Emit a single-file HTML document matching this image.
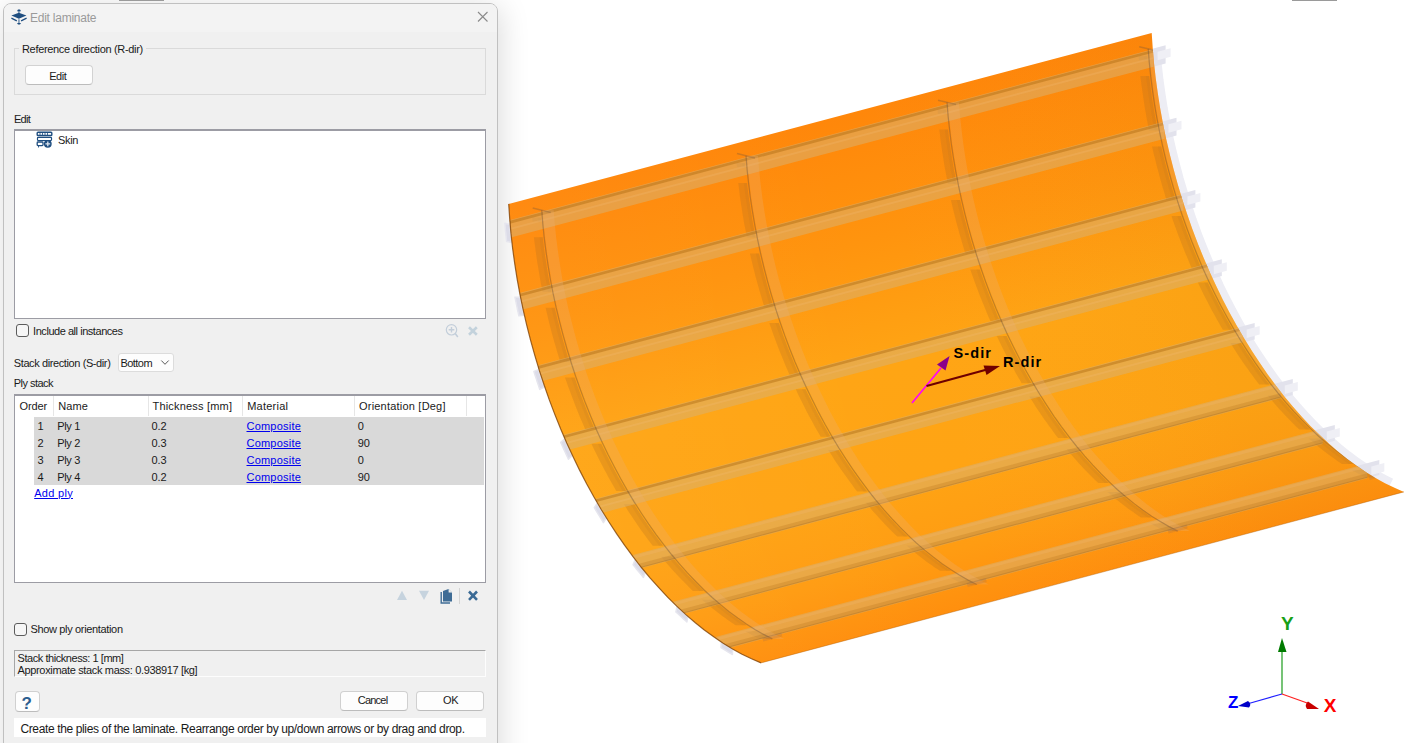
<!DOCTYPE html>
<html><head><meta charset="utf-8"><style>
*{margin:0;padding:0;box-sizing:border-box}
html,body{width:1421px;height:743px;overflow:hidden;background:#fff;position:relative;font-family:"Liberation Sans",sans-serif}
.scene{position:absolute;left:0;top:0}
.a{position:absolute}
.t{position:absolute;white-space:pre;line-height:1;font-family:"Liberation Sans",sans-serif}
</style></head><body>
<div class=a style="left:3px;top:3px;width:495px;height:780px;border-radius:8px 8px 0 0;box-shadow:2px 4px 30px rgba(0,0,0,0.15)"></div>
<svg class="scene" width="1421" height="743" viewBox="0 0 1421 743">
<defs>
<linearGradient id="gv" gradientUnits="userSpaceOnUse" x1="509.0" y1="204.0" x2="639.8" y2="695.9">
<stop offset="0" stop-color="#ff870a"/><stop offset="0.25" stop-color="#ff940e"/><stop offset="0.5" stop-color="#ffa514"/><stop offset="0.72" stop-color="#ffa414"/><stop offset="0.88" stop-color="#ff9c12"/><stop offset="1" stop-color="#ff8f0e"/>
</linearGradient>
<linearGradient id="gu" gradientUnits="userSpaceOnUse" x1="509" y1="204" x2="1152" y2="33">
<stop offset="0" stop-color="#fff" stop-opacity="0.03"/><stop offset="0.5" stop-color="#fff" stop-opacity="0"/><stop offset="1" stop-color="#000" stop-opacity="0.015"/>
</linearGradient>
<clipPath id="pc"><path d="M761.0,662.9 L751.5,658.8 L742.0,654.2 L732.5,649.0 L723.1,643.2 L713.7,636.8 L704.3,629.9 L695.0,622.5 L685.8,614.6 L676.7,606.1 L667.6,597.2 L658.8,587.7 L650.0,577.8 L641.4,567.5 L633.0,556.7 L624.7,545.4 L616.7,533.8 L608.8,521.8 L601.2,509.5 L593.8,496.8 L586.6,483.7 L579.7,470.4 L573.1,456.8 L566.7,442.9 L560.6,428.8 L554.8,414.4 L549.3,399.9 L544.2,385.2 L539.3,370.4 L534.8,355.4 L530.6,340.3 L526.7,325.1 L523.2,309.9 L520.0,294.7 L517.2,279.4 L514.8,264.2 L512.7,249.0 L511.0,233.9 L509.7,218.8 L508.7,203.9 L1151.7,32.9 L1152.7,47.8 L1154.0,62.9 L1155.7,78.0 L1157.8,93.2 L1160.2,108.4 L1163.0,123.7 L1166.2,138.9 L1169.7,154.1 L1173.6,169.3 L1177.8,184.4 L1182.3,199.4 L1187.2,214.2 L1192.3,228.9 L1197.8,243.4 L1203.6,257.8 L1209.7,271.9 L1216.1,285.8 L1222.7,299.4 L1229.6,312.7 L1236.8,325.8 L1244.2,338.5 L1251.8,350.8 L1259.7,362.8 L1267.7,374.4 L1276.0,385.7 L1284.4,396.5 L1293.0,406.8 L1301.8,416.7 L1310.6,426.2 L1319.7,435.1 L1328.8,443.6 L1338.0,451.5 L1347.3,458.9 L1356.7,465.8 L1366.1,472.2 L1375.5,478.0 L1385.0,483.2 L1394.5,487.8 L1404.0,491.9Z"/></clipPath>
</defs>
<path d="M1153.0,52.1 L1154.4,66.1 L1156.0,80.1 L1158.0,94.3 L1160.2,108.4 L1162.8,122.6 L1165.7,136.7 L1168.9,150.8 L1172.4,164.9 L1176.2,179.0 L1180.3,192.9 L1184.7,206.7 L1189.3,220.5 L1194.2,234.1 L1199.4,247.5 L1204.9,260.8 L1210.6,273.8 L1216.5,286.7 L1222.7,299.3 L1229.1,311.7 L1235.7,323.8 L1242.5,335.7 L1249.6,347.3 L1256.8,358.5 L1264.2,369.4 L1271.8,380.0 L1279.5,390.3 L1287.4,400.1 L1295.4,409.6 L1303.6,418.7 L1311.8,427.4 L1320.2,435.6 L1328.7,443.5 L1337.2,450.9 L1345.9,457.8 L1354.5,464.3 L1363.3,470.3 L1372.1,475.9 L1380.8,481.0 L1389.7,485.5" fill="none" stroke="#ededf4" stroke-width="15"/>
<path d="M530.6,214.1 L1165.6,45.2 L1165.6,63.5 L530.6,232.4Z" fill="#e2e2ec"/>
<path d="M509.7,224.5 L509.9,227.0 L510.1,229.6 L510.4,232.1 L510.6,234.7 L510.9,237.3 L511.2,239.8 L511.5,242.4 L506.6,241.4 L506.3,238.8 L506.0,236.2 L505.8,233.6 L505.5,230.9 L505.3,228.3 L505.1,225.7 L504.9,223.2Z" fill="#dcdce8" stroke="#e6e6ee" stroke-width="1.5" stroke-linejoin="round"/>
<path d="M1157.6,51.7 L1170.6,48.2 L1170.6,56.7 L1157.6,60.2Z" fill="#efeff5"/>
<path d="M541.5,286.6 L1176.5,117.8 L1176.5,135.6 L541.5,304.5Z" fill="#e2e2ec"/>
<path d="M520.0,297.2 L520.6,299.8 L521.1,302.3 L521.6,304.9 L522.2,307.5 L522.7,310.1 L523.3,312.7 L523.9,315.3 L518.9,315.8 L518.3,313.2 L517.7,310.5 L517.2,307.9 L516.6,305.2 L516.1,302.6 L515.6,300.0 L515.0,297.3Z" fill="#dcdce8" stroke="#e6e6ee" stroke-width="1.5" stroke-linejoin="round"/>
<path d="M1168.5,124.3 L1181.5,120.8 L1181.5,129.3 L1168.5,132.8Z" fill="#efeff5"/>
<path d="M560.4,358.8 L1195.4,190.0 L1195.4,207.4 L560.4,376.2Z" fill="#e2e2ec"/>
<path d="M538.5,369.6 L539.3,372.2 L540.2,374.7 L541.0,377.2 L541.8,379.7 L542.6,382.2 L543.5,384.7 L544.3,387.2 L539.8,389.4 L538.9,386.8 L538.1,384.3 L537.2,381.7 L536.4,379.1 L535.5,376.6 L534.7,374.0 L533.9,371.4Z" fill="#dcdce8" stroke="#e6e6ee" stroke-width="1.5" stroke-linejoin="round"/>
<path d="M1187.4,196.5 L1200.4,193.0 L1200.4,201.5 L1187.4,205.0Z" fill="#efeff5"/>
<path d="M586.8,428.0 L1221.8,259.2 L1221.8,276.1 L586.8,445.0Z" fill="#e2e2ec"/>
<path d="M564.6,439.2 L565.6,441.6 L566.7,444.0 L567.7,446.4 L568.8,448.7 L569.9,451.1 L571.0,453.4 L572.1,455.8 L568.4,459.2 L567.3,456.8 L566.2,454.4 L565.1,452.0 L564.0,449.6 L562.9,447.2 L561.8,444.8 L560.7,442.4Z" fill="#dcdce8" stroke="#e6e6ee" stroke-width="1.5" stroke-linejoin="round"/>
<path d="M1213.8,265.7 L1226.8,262.2 L1226.8,270.7 L1213.8,274.2Z" fill="#efeff5"/>
<path d="M619.7,491.8 L1254.7,322.9 L1254.7,339.4 L619.7,508.3Z" fill="#e2e2ec"/>
<path d="M597.1,503.5 L598.4,505.6 L599.7,507.8 L600.9,509.9 L602.2,512.0 L603.5,514.1 L604.8,516.2 L606.1,518.3 L603.4,522.6 L602.1,520.4 L600.8,518.3 L599.5,516.2 L598.2,514.1 L596.8,511.9 L595.5,509.7 L594.3,507.6Z" fill="#dcdce8" stroke="#e6e6ee" stroke-width="1.5" stroke-linejoin="round"/>
<path d="M1246.7,329.4 L1259.7,325.9 L1259.7,334.4 L1246.7,337.9Z" fill="#efeff5"/>
<path d="M657.8,547.8 L1292.8,378.9 L1292.8,394.9 L657.8,563.8Z" fill="#e2e2ec"/>
<path d="M635.0,560.1 L636.5,561.9 L637.9,563.7 L639.3,565.5 L640.8,567.3 L642.2,569.1 L643.7,570.9 L645.1,572.7 L643.4,577.4 L641.9,575.6 L640.5,573.8 L639.0,572.0 L637.5,570.2 L636.0,568.4 L634.6,566.5 L633.1,564.7Z" fill="#dcdce8" stroke="#e6e6ee" stroke-width="1.5" stroke-linejoin="round"/>
<path d="M1284.8,385.4 L1297.8,381.9 L1297.8,390.4 L1284.8,393.9Z" fill="#efeff5"/>
<path d="M699.8,594.0 L1334.8,425.1 L1334.8,440.7 L699.8,609.6Z" fill="#e2e2ec"/>
<path d="M677.0,607.0 L678.5,608.5 L680.0,609.9 L681.6,611.3 L683.1,612.8 L684.7,614.2 L686.2,615.6 L687.8,616.9 L686.9,621.9 L685.3,620.5 L683.7,619.1 L682.2,617.7 L680.6,616.2 L679.0,614.8 L677.4,613.3 L675.9,611.9Z" fill="#dcdce8" stroke="#e6e6ee" stroke-width="1.5" stroke-linejoin="round"/>
<path d="M1326.8,431.6 L1339.8,428.1 L1339.8,436.6 L1326.8,440.1Z" fill="#efeff5"/>
<path d="M744.3,628.8 L1379.3,459.9 L1379.3,475.1 L744.3,644.0Z" fill="#e2e2ec"/>
<path d="M721.4,642.6 L723.0,643.6 L724.6,644.6 L726.2,645.6 L727.8,646.6 L729.4,647.6 L731.0,648.6 L732.6,649.5 L732.4,654.5 L730.8,653.6 L729.1,652.6 L727.5,651.6 L725.9,650.6 L724.3,649.6 L722.6,648.6 L721.0,647.6Z" fill="#dcdce8" stroke="#e6e6ee" stroke-width="1.5" stroke-linejoin="round"/>
<path d="M1371.3,466.4 L1384.3,462.9 L1384.3,471.4 L1371.3,474.9Z" fill="#efeff5"/>
<path d="M761.0,662.9 L751.5,658.8 L742.0,654.2 L732.5,649.0 L723.1,643.2 L713.7,636.8 L704.3,629.9 L695.0,622.5 L685.8,614.6 L676.7,606.1 L667.6,597.2 L658.8,587.7 L650.0,577.8 L641.4,567.5 L633.0,556.7 L624.7,545.4 L616.7,533.8 L608.8,521.8 L601.2,509.5 L593.8,496.8 L586.6,483.7 L579.7,470.4 L573.1,456.8 L566.7,442.9 L560.6,428.8 L554.8,414.4 L549.3,399.9 L544.2,385.2 L539.3,370.4 L534.8,355.4 L530.6,340.3 L526.7,325.1 L523.2,309.9 L520.0,294.7 L517.2,279.4 L514.8,264.2 L512.7,249.0 L511.0,233.9 L509.7,218.8 L508.7,203.9 L1151.7,32.9 L1152.7,47.8 L1154.0,62.9 L1155.7,78.0 L1157.8,93.2 L1160.2,108.4 L1163.0,123.7 L1166.2,138.9 L1169.7,154.1 L1173.6,169.3 L1177.8,184.4 L1182.3,199.4 L1187.2,214.2 L1192.3,228.9 L1197.8,243.4 L1203.6,257.8 L1209.7,271.9 L1216.1,285.8 L1222.7,299.4 L1229.6,312.7 L1236.8,325.8 L1244.2,338.5 L1251.8,350.8 L1259.7,362.8 L1267.7,374.4 L1276.0,385.7 L1284.4,396.5 L1293.0,406.8 L1301.8,416.7 L1310.6,426.2 L1319.7,435.1 L1328.8,443.6 L1338.0,451.5 L1347.3,458.9 L1356.7,465.8 L1366.1,472.2 L1375.5,478.0 L1385.0,483.2 L1394.5,487.8 L1404.0,491.9Z" fill="url(#gv)"/>
<path d="M761.0,662.9 L751.5,658.8 L742.0,654.2 L732.5,649.0 L723.1,643.2 L713.7,636.8 L704.3,629.9 L695.0,622.5 L685.8,614.6 L676.7,606.1 L667.6,597.2 L658.8,587.7 L650.0,577.8 L641.4,567.5 L633.0,556.7 L624.7,545.4 L616.7,533.8 L608.8,521.8 L601.2,509.5 L593.8,496.8 L586.6,483.7 L579.7,470.4 L573.1,456.8 L566.7,442.9 L560.6,428.8 L554.8,414.4 L549.3,399.9 L544.2,385.2 L539.3,370.4 L534.8,355.4 L530.6,340.3 L526.7,325.1 L523.2,309.9 L520.0,294.7 L517.2,279.4 L514.8,264.2 L512.7,249.0 L511.0,233.9 L509.7,218.8 L508.7,203.9 L1151.7,32.9 L1152.7,47.8 L1154.0,62.9 L1155.7,78.0 L1157.8,93.2 L1160.2,108.4 L1163.0,123.7 L1166.2,138.9 L1169.7,154.1 L1173.6,169.3 L1177.8,184.4 L1182.3,199.4 L1187.2,214.2 L1192.3,228.9 L1197.8,243.4 L1203.6,257.8 L1209.7,271.9 L1216.1,285.8 L1222.7,299.4 L1229.6,312.7 L1236.8,325.8 L1244.2,338.5 L1251.8,350.8 L1259.7,362.8 L1267.7,374.4 L1276.0,385.7 L1284.4,396.5 L1293.0,406.8 L1301.8,416.7 L1310.6,426.2 L1319.7,435.1 L1328.8,443.6 L1338.0,451.5 L1347.3,458.9 L1356.7,465.8 L1366.1,472.2 L1375.5,478.0 L1385.0,483.2 L1394.5,487.8 L1404.0,491.9Z" fill="url(#gu)"/>
<g clip-path="url(#pc)">
<path d="M532.2,217.5 L532.3,217.8 L532.3,218.1 L532.3,218.4 L532.3,218.7 L532.4,219.0 L532.4,219.3 L532.4,219.6 L532.4,220.0 L532.5,220.3 L532.5,220.6 L532.5,220.9 L532.6,221.2 L532.6,221.5 L541.1,221.5 L541.1,221.2 L541.0,220.9 L541.0,220.6 L541.0,220.3 L540.9,220.0 L540.9,219.6 L540.9,219.3 L540.9,219.0 L540.8,218.7 L540.8,218.4 L540.8,218.1 L540.8,217.8 L540.7,217.5Z" fill="#b07020" fill-opacity="0.27"/>
<path d="M537.7,217.5 L537.8,217.8 L537.8,218.1 L537.8,218.4 L537.8,218.7 L537.9,219.0 L537.9,219.3 L537.9,219.6 L537.9,220.0 L538.0,220.3 L538.0,220.6 L538.0,220.9 L538.1,221.2 L538.1,221.5 L541.1,221.5 L541.1,221.2 L541.0,220.9 L541.0,220.6 L541.0,220.3 L540.9,220.0 L540.9,219.6 L540.9,219.3 L540.9,219.0 L540.8,218.7 L540.8,218.4 L540.8,218.1 L540.8,217.8 L540.7,217.5Z" fill="#a06a30" fill-opacity="0.10"/>
<path d="M533.9,237.3 L534.4,241.5 L535.0,245.7 L535.5,249.9 L536.1,254.0 L536.7,258.2 L537.3,262.4 L538.0,266.6 L538.7,270.8 L539.4,275.0 L540.1,279.2 L540.9,283.4 L541.7,287.6 L542.6,291.8 L551.3,291.8 L550.5,287.6 L549.7,283.4 L548.9,279.2 L548.1,275.0 L547.4,270.8 L546.7,266.6 L546.1,262.4 L545.4,258.2 L544.8,254.0 L544.2,249.9 L543.7,245.7 L543.2,241.5 L542.7,237.3Z" fill="#b07020" fill-opacity="0.27"/>
<path d="M539.6,237.3 L540.1,241.5 L540.6,245.7 L541.1,249.9 L541.7,254.0 L542.3,258.2 L543.0,262.4 L543.6,266.6 L544.3,270.8 L545.0,275.0 L545.8,279.2 L546.6,283.4 L547.4,287.6 L548.2,291.8 L551.3,291.8 L550.5,287.6 L549.7,283.4 L548.9,279.2 L548.1,275.0 L547.4,270.8 L546.7,266.6 L546.1,262.4 L545.4,258.2 L544.8,254.0 L544.2,249.9 L543.7,245.7 L543.2,241.5 L542.7,237.3Z" fill="#a06a30" fill-opacity="0.10"/>
<path d="M545.6,307.8 L546.6,312.0 L547.6,316.2 L548.6,320.4 L549.6,324.5 L550.7,328.7 L551.8,332.9 L552.9,337.0 L554.1,341.2 L555.3,345.3 L556.5,349.5 L557.7,353.6 L559.0,357.7 L560.2,361.8 L569.4,361.8 L568.1,357.7 L566.8,353.6 L565.6,349.5 L564.4,345.3 L563.2,341.2 L562.1,337.0 L560.9,332.9 L559.8,328.7 L558.8,324.5 L557.7,320.4 L556.7,316.2 L555.7,312.0 L554.7,307.8Z" fill="#b07020" fill-opacity="0.27"/>
<path d="M551.4,307.8 L552.4,312.0 L553.4,316.2 L554.4,320.4 L555.5,324.5 L556.5,328.7 L557.6,332.9 L558.8,337.0 L559.9,341.2 L561.1,345.3 L562.3,349.5 L563.5,353.6 L564.8,357.7 L566.1,361.8 L569.4,361.8 L568.1,357.7 L566.8,353.6 L565.6,349.5 L564.4,345.3 L563.2,341.2 L562.1,337.0 L560.9,332.9 L559.8,328.7 L558.8,324.5 L557.7,320.4 L556.7,316.2 L555.7,312.0 L554.7,307.8Z" fill="#a06a30" fill-opacity="0.10"/>
<path d="M565.0,377.4 L566.4,381.5 L567.8,385.5 L569.3,389.5 L570.8,393.6 L572.3,397.6 L573.8,401.6 L575.3,405.5 L576.9,409.5 L578.5,413.4 L580.1,417.4 L581.8,421.3 L583.5,425.2 L585.1,429.1 L594.6,429.1 L593.0,425.2 L591.3,421.3 L589.6,417.4 L588.0,413.4 L586.4,409.5 L584.9,405.5 L583.3,401.6 L581.8,397.6 L580.3,393.6 L578.8,389.5 L577.3,385.5 L575.9,381.5 L574.5,377.4Z" fill="#b07020" fill-opacity="0.27"/>
<path d="M571.0,377.4 L572.5,381.5 L573.9,385.5 L575.3,389.5 L576.8,393.6 L578.3,397.6 L579.8,401.6 L581.4,405.5 L583.0,409.5 L584.6,413.4 L586.2,417.4 L587.8,421.3 L589.5,425.2 L591.2,429.1 L594.6,429.1 L593.0,425.2 L591.3,421.3 L589.6,417.4 L588.0,413.4 L586.4,409.5 L584.9,405.5 L583.3,401.6 L581.8,397.6 L580.3,393.6 L578.8,389.5 L577.3,385.5 L575.9,381.5 L574.5,377.4Z" fill="#a06a30" fill-opacity="0.10"/>
<path d="M591.4,443.7 L593.2,447.4 L595.0,451.2 L596.9,455.0 L598.7,458.7 L600.6,462.4 L602.5,466.0 L604.4,469.7 L606.4,473.3 L608.3,476.9 L610.3,480.5 L612.3,484.1 L614.3,487.6 L616.3,491.1 L626.2,491.1 L624.2,487.6 L622.2,484.1 L620.2,480.5 L618.2,476.9 L616.2,473.3 L614.3,469.7 L612.4,466.0 L610.5,462.4 L608.6,458.7 L606.7,455.0 L604.9,451.2 L603.1,447.4 L601.3,443.7Z" fill="#b07020" fill-opacity="0.27"/>
<path d="M597.7,443.7 L599.5,447.4 L601.3,451.2 L603.1,455.0 L605.0,458.7 L606.9,462.4 L608.8,466.0 L610.7,469.7 L612.6,473.3 L614.6,476.9 L616.6,480.5 L618.6,484.1 L620.6,487.6 L622.6,491.1 L626.2,491.1 L624.2,487.6 L622.2,484.1 L620.2,480.5 L618.2,476.9 L616.2,473.3 L614.3,469.7 L612.4,466.0 L610.5,462.4 L608.6,458.7 L606.7,455.0 L604.9,451.2 L603.1,447.4 L601.3,443.7Z" fill="#a06a30" fill-opacity="0.10"/>
<path d="M623.9,504.2 L626.0,507.6 L628.1,510.9 L630.3,514.2 L632.5,517.5 L634.7,520.8 L636.9,524.0 L639.1,527.2 L641.3,530.4 L643.6,533.5 L645.8,536.6 L648.1,539.7 L650.4,542.7 L652.7,545.7 L663.0,545.7 L660.7,542.7 L658.4,539.7 L656.1,536.6 L653.8,533.5 L651.6,530.4 L649.3,527.2 L647.1,524.0 L644.9,520.8 L642.7,517.5 L640.6,514.2 L638.4,510.9 L636.3,507.6 L634.2,504.2Z" fill="#b07020" fill-opacity="0.27"/>
<path d="M630.4,504.2 L632.5,507.6 L634.6,510.9 L636.8,514.2 L638.9,517.5 L641.1,520.8 L643.3,524.0 L645.6,527.2 L647.8,530.4 L650.0,533.5 L652.3,536.6 L654.6,539.7 L656.9,542.7 L659.2,545.7 L663.0,545.7 L660.7,542.7 L658.4,539.7 L656.1,536.6 L653.8,533.5 L651.6,530.4 L649.3,527.2 L647.1,524.0 L644.9,520.8 L642.7,517.5 L640.6,514.2 L638.4,510.9 L636.3,507.6 L634.2,504.2Z" fill="#a06a30" fill-opacity="0.10"/>
<path d="M661.3,556.8 L663.6,559.7 L666.0,562.5 L668.4,565.3 L670.8,568.0 L673.2,570.7 L675.6,573.3 L678.1,576.0 L680.5,578.6 L683.0,581.1 L685.5,583.6 L687.9,586.1 L690.4,588.5 L692.9,590.9 L703.6,590.9 L701.1,588.5 L698.6,586.1 L696.1,583.6 L693.6,581.1 L691.2,578.6 L688.7,576.0 L686.3,573.3 L683.9,570.7 L681.4,568.0 L679.0,565.3 L676.6,562.5 L674.3,559.7 L671.9,556.8Z" fill="#b07020" fill-opacity="0.27"/>
<path d="M667.9,556.8 L670.3,559.7 L672.7,562.5 L675.1,565.3 L677.5,568.0 L679.9,570.7 L682.3,573.3 L684.8,576.0 L687.2,578.6 L689.7,581.1 L692.1,583.6 L694.6,586.1 L697.1,588.5 L699.6,590.9 L703.6,590.9 L701.1,588.5 L698.6,586.1 L696.1,583.6 L693.6,581.1 L691.2,578.6 L688.7,576.0 L686.3,573.3 L683.9,570.7 L681.4,568.0 L679.0,565.3 L676.6,562.5 L674.3,559.7 L671.9,556.8Z" fill="#a06a30" fill-opacity="0.10"/>
<path d="M702.1,599.7 L704.7,601.9 L707.2,604.1 L709.8,606.2 L712.3,608.3 L714.9,610.3 L717.5,612.3 L720.0,614.3 L722.6,616.2 L725.2,618.1 L727.8,619.9 L730.4,621.7 L733.0,623.5 L735.5,625.2 L746.6,625.2 L744.0,623.5 L741.4,621.7 L738.8,619.9 L736.2,618.1 L733.6,616.2 L731.0,614.3 L728.5,612.3 L725.9,610.3 L723.3,608.3 L720.8,606.2 L718.2,604.1 L715.7,601.9 L713.2,599.7Z" fill="#b07020" fill-opacity="0.27"/>
<path d="M709.0,599.7 L711.6,601.9 L714.1,604.1 L716.7,606.2 L719.2,608.3 L721.8,610.3 L724.3,612.3 L726.9,614.3 L729.5,616.2 L732.1,618.1 L734.7,619.9 L737.2,621.7 L739.8,623.5 L742.4,625.2 L746.6,625.2 L744.0,623.5 L741.4,621.7 L738.8,619.9 L736.2,618.1 L733.6,616.2 L731.0,614.3 L728.5,612.3 L725.9,610.3 L723.3,608.3 L720.8,606.2 L718.2,604.1 L715.7,601.9 L713.2,599.7Z" fill="#a06a30" fill-opacity="0.10"/>
<path d="M745.2,631.3 L746.3,631.9 L747.4,632.5 L748.5,633.1 L749.6,633.7 L750.7,634.3 L751.8,634.9 L752.9,635.5 L754.0,636.1 L755.1,636.7 L756.2,637.2 L757.3,637.8 L758.4,638.4 L759.5,638.9 L770.8,638.9 L769.7,638.4 L768.6,637.8 L767.5,637.2 L766.4,636.7 L765.3,636.1 L764.2,635.5 L763.1,634.9 L762.0,634.3 L760.9,633.7 L759.8,633.1 L758.7,632.5 L757.6,631.9 L756.5,631.3Z" fill="#b07020" fill-opacity="0.27"/>
<path d="M752.2,631.3 L753.3,631.9 L754.4,632.5 L755.5,633.1 L756.6,633.7 L757.7,634.3 L758.8,634.9 L759.9,635.5 L761.0,636.1 L762.1,636.7 L763.2,637.2 L764.3,637.8 L765.4,638.4 L766.5,638.9 L770.8,638.9 L769.7,638.4 L768.6,637.8 L767.5,637.2 L766.4,636.7 L765.3,636.1 L764.2,635.5 L763.1,634.9 L762.0,634.3 L760.9,633.7 L759.8,633.1 L758.7,632.5 L757.6,631.9 L756.5,631.3Z" fill="#a06a30" fill-opacity="0.10"/>
<path d="M736.6,163.1 L736.6,163.4 L736.6,163.7 L736.7,164.1 L736.7,164.4 L736.7,164.7 L736.7,165.0 L736.8,165.3 L736.8,165.6 L736.8,165.9 L736.8,166.2 L736.9,166.5 L736.9,166.9 L736.9,167.2 L745.4,167.2 L745.4,166.9 L745.4,166.5 L745.3,166.2 L745.3,165.9 L745.3,165.6 L745.3,165.3 L745.2,165.0 L745.2,164.7 L745.2,164.4 L745.2,164.1 L745.1,163.7 L745.1,163.4 L745.1,163.1Z" fill="#b07020" fill-opacity="0.27"/>
<path d="M742.1,163.1 L742.1,163.4 L742.1,163.7 L742.2,164.1 L742.2,164.4 L742.2,164.7 L742.2,165.0 L742.3,165.3 L742.3,165.6 L742.3,165.9 L742.3,166.2 L742.4,166.5 L742.4,166.9 L742.4,167.2 L745.4,167.2 L745.4,166.9 L745.4,166.5 L745.3,166.2 L745.3,165.9 L745.3,165.6 L745.3,165.3 L745.2,165.0 L745.2,164.7 L745.2,164.4 L745.2,164.1 L745.1,163.7 L745.1,163.4 L745.1,163.1Z" fill="#a06a30" fill-opacity="0.10"/>
<path d="M738.3,183.0 L738.8,187.2 L739.3,191.3 L739.8,195.5 L740.4,199.7 L741.0,203.9 L741.7,208.1 L742.3,212.3 L743.0,216.5 L743.7,220.7 L744.5,224.9 L745.3,229.1 L746.1,233.3 L746.9,237.5 L755.6,237.5 L754.8,233.3 L754.0,229.1 L753.2,224.9 L752.5,220.7 L751.8,216.5 L751.1,212.3 L750.4,208.1 L749.8,203.9 L749.2,199.7 L748.6,195.5 L748.0,191.3 L747.5,187.2 L747.0,183.0Z" fill="#b07020" fill-opacity="0.27"/>
<path d="M743.9,183.0 L744.4,187.2 L744.9,191.3 L745.5,195.5 L746.1,199.7 L746.7,203.9 L747.3,208.1 L748.0,212.3 L748.7,216.5 L749.4,220.7 L750.1,224.9 L750.9,229.1 L751.7,233.3 L752.5,237.5 L755.6,237.5 L754.8,233.3 L754.0,229.1 L753.2,224.9 L752.5,220.7 L751.8,216.5 L751.1,212.3 L750.4,208.1 L749.8,203.9 L749.2,199.7 L748.6,195.5 L748.0,191.3 L747.5,187.2 L747.0,183.0Z" fill="#a06a30" fill-opacity="0.10"/>
<path d="M749.9,253.5 L750.9,257.6 L751.9,261.8 L752.9,266.0 L754.0,270.2 L755.0,274.4 L756.1,278.5 L757.3,282.7 L758.4,286.8 L759.6,291.0 L760.8,295.1 L762.0,299.3 L763.3,303.4 L764.6,307.5 L773.7,307.5 L772.4,303.4 L771.2,299.3 L769.9,295.1 L768.7,291.0 L767.6,286.8 L766.4,282.7 L765.3,278.5 L764.2,274.4 L763.1,270.2 L762.1,266.0 L761.0,261.8 L760.0,257.6 L759.1,253.5Z" fill="#b07020" fill-opacity="0.27"/>
<path d="M755.8,253.5 L756.8,257.6 L757.7,261.8 L758.8,266.0 L759.8,270.2 L760.9,274.4 L762.0,278.5 L763.1,282.7 L764.3,286.8 L765.5,291.0 L766.7,295.1 L767.9,299.3 L769.1,303.4 L770.4,307.5 L773.7,307.5 L772.4,303.4 L771.2,299.3 L769.9,295.1 L768.7,291.0 L767.6,286.8 L766.4,282.7 L765.3,278.5 L764.2,274.4 L763.1,270.2 L762.1,266.0 L761.0,261.8 L760.0,257.6 L759.1,253.5Z" fill="#a06a30" fill-opacity="0.10"/>
<path d="M769.3,323.1 L770.7,327.1 L772.2,331.2 L773.6,335.2 L775.1,339.2 L776.6,343.2 L778.1,347.2 L779.7,351.2 L781.3,355.2 L782.9,359.1 L784.5,363.0 L786.1,366.9 L787.8,370.8 L789.5,374.7 L799.0,374.7 L797.3,370.8 L795.6,366.9 L794.0,363.0 L792.4,359.1 L790.8,355.2 L789.2,351.2 L787.6,347.2 L786.1,343.2 L784.6,339.2 L783.1,335.2 L781.7,331.2 L780.3,327.1 L778.8,323.1Z" fill="#b07020" fill-opacity="0.27"/>
<path d="M775.4,323.1 L776.8,327.1 L778.2,331.2 L779.7,335.2 L781.2,339.2 L782.7,343.2 L784.2,347.2 L785.7,351.2 L787.3,355.2 L788.9,359.1 L790.5,363.0 L792.2,366.9 L793.9,370.8 L795.5,374.7 L799.0,374.7 L797.3,370.8 L795.6,366.9 L794.0,363.0 L792.4,359.1 L790.8,355.2 L789.2,351.2 L787.6,347.2 L786.1,343.2 L784.6,339.2 L783.1,335.2 L781.7,331.2 L780.3,327.1 L778.8,323.1Z" fill="#a06a30" fill-opacity="0.10"/>
<path d="M795.8,389.3 L797.5,393.1 L799.4,396.9 L801.2,400.6 L803.1,404.3 L804.9,408.0 L806.8,411.7 L808.8,415.4 L810.7,419.0 L812.7,422.6 L814.6,426.2 L816.6,429.7 L818.7,433.2 L820.7,436.7 L830.6,436.7 L828.5,433.2 L826.5,429.7 L824.5,426.2 L822.5,422.6 L820.6,419.0 L818.6,415.4 L816.7,411.7 L814.8,408.0 L812.9,404.3 L811.1,400.6 L809.3,396.9 L807.4,393.1 L805.6,389.3Z" fill="#b07020" fill-opacity="0.27"/>
<path d="M802.0,389.3 L803.8,393.1 L805.6,396.9 L807.5,400.6 L809.3,404.3 L811.2,408.0 L813.1,411.7 L815.0,415.4 L817.0,419.0 L818.9,422.6 L820.9,426.2 L822.9,429.7 L824.9,433.2 L826.9,436.7 L830.6,436.7 L828.5,433.2 L826.5,429.7 L824.5,426.2 L822.5,422.6 L820.6,419.0 L818.6,415.4 L816.7,411.7 L814.8,408.0 L812.9,404.3 L811.1,400.6 L809.3,396.9 L807.4,393.1 L805.6,389.3Z" fill="#a06a30" fill-opacity="0.10"/>
<path d="M828.2,449.9 L830.4,453.2 L832.5,456.6 L834.6,459.9 L836.8,463.2 L839.0,466.4 L841.2,469.7 L843.4,472.8 L845.7,476.0 L847.9,479.1 L850.2,482.2 L852.5,485.3 L854.7,488.4 L857.1,491.4 L867.3,491.4 L865.0,488.4 L862.7,485.3 L860.4,482.2 L858.2,479.1 L855.9,476.0 L853.7,472.8 L851.5,469.7 L849.3,466.4 L847.1,463.2 L844.9,459.9 L842.8,456.6 L840.6,453.2 L838.5,449.9Z" fill="#b07020" fill-opacity="0.27"/>
<path d="M834.7,449.9 L836.8,453.2 L839.0,456.6 L841.1,459.9 L843.3,463.2 L845.5,466.4 L847.7,469.7 L849.9,472.8 L852.1,476.0 L854.4,479.1 L856.6,482.2 L858.9,485.3 L861.2,488.4 L863.5,491.4 L867.3,491.4 L865.0,488.4 L862.7,485.3 L860.4,482.2 L858.2,479.1 L855.9,476.0 L853.7,472.8 L851.5,469.7 L849.3,466.4 L847.1,463.2 L844.9,459.9 L842.8,456.6 L840.6,453.2 L838.5,449.9Z" fill="#a06a30" fill-opacity="0.10"/>
<path d="M865.6,502.5 L868.0,505.3 L870.3,508.1 L872.7,510.9 L875.1,513.6 L877.6,516.3 L880.0,519.0 L882.4,521.6 L884.9,524.2 L887.3,526.8 L889.8,529.3 L892.3,531.8 L894.8,534.2 L897.3,536.6 L907.9,536.6 L905.4,534.2 L902.9,531.8 L900.5,529.3 L898.0,526.8 L895.5,524.2 L893.1,521.6 L890.6,519.0 L888.2,516.3 L885.8,513.6 L883.4,510.9 L881.0,508.1 L878.6,505.3 L876.2,502.5Z" fill="#b07020" fill-opacity="0.27"/>
<path d="M872.3,502.5 L874.6,505.3 L877.0,508.1 L879.4,510.9 L881.8,513.6 L884.2,516.3 L886.7,519.0 L889.1,521.6 L891.6,524.2 L894.0,526.8 L896.5,529.3 L899.0,531.8 L901.5,534.2 L904.0,536.6 L907.9,536.6 L905.4,534.2 L902.9,531.8 L900.5,529.3 L898.0,526.8 L895.5,524.2 L893.1,521.6 L890.6,519.0 L888.2,516.3 L885.8,513.6 L883.4,510.9 L881.0,508.1 L878.6,505.3 L876.2,502.5Z" fill="#a06a30" fill-opacity="0.10"/>
<path d="M906.5,545.4 L909.0,547.6 L911.6,549.7 L914.1,551.9 L916.7,553.9 L919.2,556.0 L921.8,558.0 L924.4,559.9 L926.9,561.9 L929.5,563.7 L932.1,565.6 L934.7,567.4 L937.3,569.1 L939.9,570.8 L950.9,570.8 L948.3,569.1 L945.7,567.4 L943.1,565.6 L940.6,563.7 L938.0,561.9 L935.4,559.9 L932.8,558.0 L930.3,556.0 L927.7,553.9 L925.1,551.9 L922.6,549.7 L920.1,547.6 L917.5,545.4Z" fill="#b07020" fill-opacity="0.27"/>
<path d="M913.4,545.4 L915.9,547.6 L918.5,549.7 L921.0,551.9 L923.6,553.9 L926.1,556.0 L928.7,558.0 L931.3,559.9 L933.8,561.9 L936.4,563.7 L939.0,565.6 L941.6,567.4 L944.2,569.1 L946.8,570.8 L950.9,570.8 L948.3,569.1 L945.7,567.4 L943.1,565.6 L940.6,563.7 L938.0,561.9 L935.4,559.9 L932.8,558.0 L930.3,556.0 L927.7,553.9 L925.1,551.9 L922.6,549.7 L920.1,547.6 L917.5,545.4Z" fill="#a06a30" fill-opacity="0.10"/>
<path d="M949.5,576.9 L950.6,577.5 L951.7,578.2 L952.8,578.8 L953.9,579.4 L955.0,580.0 L956.1,580.6 L957.2,581.2 L958.3,581.8 L959.4,582.3 L960.5,582.9 L961.6,583.5 L962.7,584.0 L963.8,584.5 L975.2,584.5 L974.1,584.0 L972.9,583.5 L971.8,582.9 L970.7,582.3 L969.6,581.8 L968.5,581.2 L967.4,580.6 L966.3,580.0 L965.2,579.4 L964.1,578.8 L963.0,578.2 L961.9,577.5 L960.8,576.9Z" fill="#b07020" fill-opacity="0.27"/>
<path d="M956.6,576.9 L957.7,577.5 L958.8,578.2 L959.9,578.8 L961.0,579.4 L962.1,580.0 L963.2,580.6 L964.3,581.2 L965.4,581.8 L966.5,582.3 L967.6,582.9 L968.7,583.5 L969.8,584.0 L970.9,584.5 L975.2,584.5 L974.1,584.0 L972.9,583.5 L971.8,582.9 L970.7,582.3 L969.6,581.8 L968.5,581.2 L967.4,580.6 L966.3,580.0 L965.2,579.4 L964.1,578.8 L963.0,578.2 L961.9,577.5 L960.8,576.9Z" fill="#a06a30" fill-opacity="0.10"/>
<path d="M937.6,109.7 L937.6,110.0 L937.6,110.3 L937.7,110.6 L937.7,110.9 L937.7,111.2 L937.7,111.5 L937.8,111.8 L937.8,112.2 L937.8,112.5 L937.8,112.8 L937.9,113.1 L937.9,113.4 L937.9,113.7 L946.4,113.7 L946.4,113.4 L946.4,113.1 L946.4,112.8 L946.3,112.5 L946.3,112.2 L946.3,111.8 L946.2,111.5 L946.2,111.2 L946.2,110.9 L946.2,110.6 L946.1,110.3 L946.1,110.0 L946.1,109.7Z" fill="#b07020" fill-opacity="0.27"/>
<path d="M943.1,109.7 L943.1,110.0 L943.1,110.3 L943.2,110.6 L943.2,110.9 L943.2,111.2 L943.2,111.5 L943.3,111.8 L943.3,112.2 L943.3,112.5 L943.3,112.8 L943.4,113.1 L943.4,113.4 L943.4,113.7 L946.4,113.7 L946.4,113.4 L946.4,113.1 L946.4,112.8 L946.3,112.5 L946.3,112.2 L946.3,111.8 L946.2,111.5 L946.2,111.2 L946.2,110.9 L946.2,110.6 L946.1,110.3 L946.1,110.0 L946.1,109.7Z" fill="#a06a30" fill-opacity="0.10"/>
<path d="M939.3,129.5 L939.8,133.7 L940.3,137.9 L940.8,142.1 L941.4,146.3 L942.0,150.4 L942.7,154.6 L943.3,158.8 L944.0,163.0 L944.7,167.2 L945.5,171.4 L946.3,175.6 L947.1,179.8 L947.9,184.0 L956.6,184.0 L955.8,179.8 L955.0,175.6 L954.2,171.4 L953.5,167.2 L952.8,163.0 L952.1,158.8 L951.4,154.6 L950.8,150.4 L950.2,146.3 L949.6,142.1 L949.0,137.9 L948.5,133.7 L948.0,129.5Z" fill="#b07020" fill-opacity="0.27"/>
<path d="M944.9,129.5 L945.4,133.7 L945.9,137.9 L946.5,142.1 L947.1,146.3 L947.7,150.4 L948.3,154.6 L949.0,158.8 L949.7,163.0 L950.4,167.2 L951.1,171.4 L951.9,175.6 L952.7,179.8 L953.5,184.0 L956.6,184.0 L955.8,179.8 L955.0,175.6 L954.2,171.4 L953.5,167.2 L952.8,163.0 L952.1,158.8 L951.4,154.6 L950.8,150.4 L950.2,146.3 L949.6,142.1 L949.0,137.9 L948.5,133.7 L948.0,129.5Z" fill="#a06a30" fill-opacity="0.10"/>
<path d="M950.9,200.0 L951.9,204.2 L952.9,208.4 L953.9,212.6 L955.0,216.7 L956.0,220.9 L957.1,225.1 L958.3,229.2 L959.4,233.4 L960.6,237.5 L961.8,241.7 L963.0,245.8 L964.3,249.9 L965.6,254.0 L974.7,254.0 L973.4,249.9 L972.2,245.8 L970.9,241.7 L969.7,237.5 L968.6,233.4 L967.4,229.2 L966.3,225.1 L965.2,220.9 L964.1,216.7 L963.1,212.6 L962.0,208.4 L961.0,204.2 L960.1,200.0Z" fill="#b07020" fill-opacity="0.27"/>
<path d="M956.8,200.0 L957.8,204.2 L958.8,208.4 L959.8,212.6 L960.8,216.7 L961.9,220.9 L963.0,225.1 L964.1,229.2 L965.3,233.4 L966.5,237.5 L967.7,241.7 L968.9,245.8 L970.2,249.9 L971.4,254.0 L974.7,254.0 L973.4,249.9 L972.2,245.8 L970.9,241.7 L969.7,237.5 L968.6,233.4 L967.4,229.2 L966.3,225.1 L965.2,220.9 L964.1,216.7 L963.1,212.6 L962.0,208.4 L961.0,204.2 L960.1,200.0Z" fill="#a06a30" fill-opacity="0.10"/>
<path d="M970.3,269.6 L971.7,273.7 L973.2,277.7 L974.6,281.7 L976.1,285.8 L977.6,289.8 L979.1,293.8 L980.7,297.7 L982.3,301.7 L983.9,305.6 L985.5,309.6 L987.1,313.5 L988.8,317.4 L990.5,321.3 L1000.0,321.3 L998.3,317.4 L996.6,313.5 L995.0,309.6 L993.4,305.6 L991.8,301.7 L990.2,297.7 L988.6,293.8 L987.1,289.8 L985.6,285.8 L984.1,281.7 L982.7,277.7 L981.3,273.7 L979.8,269.6Z" fill="#b07020" fill-opacity="0.27"/>
<path d="M976.4,269.6 L977.8,273.7 L979.2,277.7 L980.7,281.7 L982.2,285.8 L983.7,289.8 L985.2,293.8 L986.7,297.7 L988.3,301.7 L989.9,305.6 L991.5,309.6 L993.2,313.5 L994.9,317.4 L996.5,321.3 L1000.0,321.3 L998.3,317.4 L996.6,313.5 L995.0,309.6 L993.4,305.6 L991.8,301.7 L990.2,297.7 L988.6,293.8 L987.1,289.8 L985.6,285.8 L984.1,281.7 L982.7,277.7 L981.3,273.7 L979.8,269.6Z" fill="#a06a30" fill-opacity="0.10"/>
<path d="M996.8,335.9 L998.6,339.7 L1000.4,343.4 L1002.2,347.2 L1004.1,350.9 L1005.9,354.6 L1007.8,358.2 L1009.8,361.9 L1011.7,365.5 L1013.7,369.1 L1015.6,372.7 L1017.6,376.3 L1019.7,379.8 L1021.7,383.3 L1031.6,383.3 L1029.5,379.8 L1027.5,376.3 L1025.5,372.7 L1023.5,369.1 L1021.6,365.5 L1019.6,361.9 L1017.7,358.2 L1015.8,354.6 L1014.0,350.9 L1012.1,347.2 L1010.3,343.4 L1008.4,339.7 L1006.6,335.9Z" fill="#b07020" fill-opacity="0.27"/>
<path d="M1003.0,335.9 L1004.8,339.7 L1006.6,343.4 L1008.5,347.2 L1010.3,350.9 L1012.2,354.6 L1014.1,358.2 L1016.0,361.9 L1018.0,365.5 L1019.9,369.1 L1021.9,372.7 L1023.9,376.3 L1025.9,379.8 L1028.0,383.3 L1031.6,383.3 L1029.5,379.8 L1027.5,376.3 L1025.5,372.7 L1023.5,369.1 L1021.6,365.5 L1019.6,361.9 L1017.7,358.2 L1015.8,354.6 L1014.0,350.9 L1012.1,347.2 L1010.3,343.4 L1008.4,339.7 L1006.6,335.9Z" fill="#a06a30" fill-opacity="0.10"/>
<path d="M1029.2,396.4 L1031.4,399.8 L1033.5,403.1 L1035.6,406.4 L1037.8,409.7 L1040.0,413.0 L1042.2,416.2 L1044.4,419.4 L1046.7,422.6 L1048.9,425.7 L1051.2,428.8 L1053.5,431.9 L1055.7,434.9 L1058.1,437.9 L1068.3,437.9 L1066.0,434.9 L1063.7,431.9 L1061.4,428.8 L1059.2,425.7 L1056.9,422.6 L1054.7,419.4 L1052.5,416.2 L1050.3,413.0 L1048.1,409.7 L1045.9,406.4 L1043.8,403.1 L1041.6,399.8 L1039.5,396.4Z" fill="#b07020" fill-opacity="0.27"/>
<path d="M1035.7,396.4 L1037.8,399.8 L1040.0,403.1 L1042.1,406.4 L1044.3,409.7 L1046.5,413.0 L1048.7,416.2 L1050.9,419.4 L1053.1,422.6 L1055.4,425.7 L1057.6,428.8 L1059.9,431.9 L1062.2,434.9 L1064.5,437.9 L1068.3,437.9 L1066.0,434.9 L1063.7,431.9 L1061.4,428.8 L1059.2,425.7 L1056.9,422.6 L1054.7,419.4 L1052.5,416.2 L1050.3,413.0 L1048.1,409.7 L1045.9,406.4 L1043.8,403.1 L1041.6,399.8 L1039.5,396.4Z" fill="#a06a30" fill-opacity="0.10"/>
<path d="M1066.6,449.0 L1069.0,451.9 L1071.4,454.7 L1073.7,457.5 L1076.2,460.2 L1078.6,462.9 L1081.0,465.6 L1083.4,468.2 L1085.9,470.8 L1088.3,473.3 L1090.8,475.8 L1093.3,478.3 L1095.8,480.7 L1098.3,483.1 L1108.9,483.1 L1106.4,480.7 L1103.9,478.3 L1101.5,475.8 L1099.0,473.3 L1096.5,470.8 L1094.1,468.2 L1091.6,465.6 L1089.2,462.9 L1086.8,460.2 L1084.4,457.5 L1082.0,454.7 L1079.6,451.9 L1077.2,449.0Z" fill="#b07020" fill-opacity="0.27"/>
<path d="M1073.3,449.0 L1075.6,451.9 L1078.0,454.7 L1080.4,457.5 L1082.8,460.2 L1085.2,462.9 L1087.7,465.6 L1090.1,468.2 L1092.6,470.8 L1095.0,473.3 L1097.5,475.8 L1100.0,478.3 L1102.5,480.7 L1105.0,483.1 L1108.9,483.1 L1106.4,480.7 L1103.9,478.3 L1101.5,475.8 L1099.0,473.3 L1096.5,470.8 L1094.1,468.2 L1091.6,465.6 L1089.2,462.9 L1086.8,460.2 L1084.4,457.5 L1082.0,454.7 L1079.6,451.9 L1077.2,449.0Z" fill="#a06a30" fill-opacity="0.10"/>
<path d="M1107.5,491.9 L1110.0,494.1 L1112.6,496.3 L1115.1,498.4 L1117.7,500.5 L1120.2,502.5 L1122.8,504.5 L1125.4,506.5 L1127.9,508.4 L1130.5,510.3 L1133.1,512.1 L1135.7,513.9 L1138.3,515.7 L1140.9,517.4 L1151.9,517.4 L1149.3,515.7 L1146.7,513.9 L1144.1,512.1 L1141.6,510.3 L1139.0,508.4 L1136.4,506.5 L1133.8,504.5 L1131.3,502.5 L1128.7,500.5 L1126.1,498.4 L1123.6,496.3 L1121.1,494.1 L1118.5,491.9Z" fill="#b07020" fill-opacity="0.27"/>
<path d="M1114.4,491.9 L1116.9,494.1 L1119.5,496.3 L1122.0,498.4 L1124.6,500.5 L1127.1,502.5 L1129.7,504.5 L1132.3,506.5 L1134.8,508.4 L1137.4,510.3 L1140.0,512.1 L1142.6,513.9 L1145.2,515.7 L1147.8,517.4 L1151.9,517.4 L1149.3,515.7 L1146.7,513.9 L1144.1,512.1 L1141.6,510.3 L1139.0,508.4 L1136.4,506.5 L1133.8,504.5 L1131.3,502.5 L1128.7,500.5 L1126.1,498.4 L1123.6,496.3 L1121.1,494.1 L1118.5,491.9Z" fill="#a06a30" fill-opacity="0.10"/>
<path d="M1150.5,523.5 L1151.6,524.1 L1152.7,524.7 L1153.8,525.3 L1154.9,525.9 L1156.0,526.6 L1157.1,527.1 L1158.2,527.7 L1159.3,528.3 L1160.4,528.9 L1161.5,529.4 L1162.6,530.0 L1163.7,530.6 L1164.8,531.1 L1176.2,531.1 L1175.1,530.6 L1174.0,530.0 L1172.8,529.4 L1171.7,528.9 L1170.6,528.3 L1169.5,527.7 L1168.4,527.1 L1167.3,526.6 L1166.2,525.9 L1165.1,525.3 L1164.0,524.7 L1162.9,524.1 L1161.8,523.5Z" fill="#b07020" fill-opacity="0.27"/>
<path d="M1157.6,523.5 L1158.7,524.1 L1159.8,524.7 L1160.9,525.3 L1162.0,525.9 L1163.1,526.6 L1164.2,527.1 L1165.3,527.7 L1166.4,528.3 L1167.5,528.9 L1168.6,529.4 L1169.7,530.0 L1170.8,530.6 L1171.9,531.1 L1176.2,531.1 L1175.1,530.6 L1174.0,530.0 L1172.8,529.4 L1171.7,528.9 L1170.6,528.3 L1169.5,527.7 L1168.4,527.1 L1167.3,526.6 L1166.2,525.9 L1165.1,525.3 L1164.0,524.7 L1162.9,524.1 L1161.8,523.5Z" fill="#a06a30" fill-opacity="0.10"/>
<path d="M1138.7,56.2 L1138.7,56.5 L1138.8,56.8 L1138.8,57.1 L1138.8,57.4 L1138.8,57.7 L1138.9,58.0 L1138.9,58.4 L1138.9,58.7 L1138.9,59.0 L1139.0,59.3 L1139.0,59.6 L1139.0,59.9 L1139.1,60.2 L1147.6,60.2 L1147.5,59.9 L1147.5,59.6 L1147.5,59.3 L1147.5,59.0 L1147.4,58.7 L1147.4,58.4 L1147.4,58.0 L1147.3,57.7 L1147.3,57.4 L1147.3,57.1 L1147.3,56.8 L1147.2,56.5 L1147.2,56.2Z" fill="#b07020" fill-opacity="0.27"/>
<path d="M1144.2,56.2 L1144.2,56.5 L1144.3,56.8 L1144.3,57.1 L1144.3,57.4 L1144.3,57.7 L1144.4,58.0 L1144.4,58.4 L1144.4,58.7 L1144.5,59.0 L1144.5,59.3 L1144.5,59.6 L1144.5,59.9 L1144.6,60.2 L1147.6,60.2 L1147.5,59.9 L1147.5,59.6 L1147.5,59.3 L1147.5,59.0 L1147.4,58.7 L1147.4,58.4 L1147.4,58.0 L1147.3,57.7 L1147.3,57.4 L1147.3,57.1 L1147.3,56.8 L1147.2,56.5 L1147.2,56.2Z" fill="#a06a30" fill-opacity="0.10"/>
<path d="M1140.4,76.1 L1140.9,80.2 L1141.4,84.4 L1142.0,88.6 L1142.6,92.8 L1143.2,96.9 L1143.8,101.1 L1144.5,105.3 L1145.1,109.5 L1145.9,113.7 L1146.6,117.9 L1147.4,122.1 L1148.2,126.3 L1149.0,130.5 L1157.8,130.5 L1156.9,126.3 L1156.1,122.1 L1155.4,117.9 L1154.6,113.7 L1153.9,109.5 L1153.2,105.3 L1152.5,101.1 L1151.9,96.9 L1151.3,92.8 L1150.7,88.6 L1150.2,84.4 L1149.7,80.2 L1149.2,76.1Z" fill="#b07020" fill-opacity="0.27"/>
<path d="M1146.1,76.1 L1146.5,80.2 L1147.1,84.4 L1147.6,88.6 L1148.2,92.8 L1148.8,96.9 L1149.4,101.1 L1150.1,105.3 L1150.8,109.5 L1151.5,113.7 L1152.3,117.9 L1153.0,122.1 L1153.8,126.3 L1154.7,130.5 L1157.8,130.5 L1156.9,126.3 L1156.1,122.1 L1155.4,117.9 L1154.6,113.7 L1153.9,109.5 L1153.2,105.3 L1152.5,101.1 L1151.9,96.9 L1151.3,92.8 L1150.7,88.6 L1150.2,84.4 L1149.7,80.2 L1149.2,76.1Z" fill="#a06a30" fill-opacity="0.10"/>
<path d="M1152.1,146.5 L1153.0,150.7 L1154.0,154.9 L1155.1,159.1 L1156.1,163.2 L1157.2,167.4 L1158.3,171.6 L1159.4,175.7 L1160.6,179.9 L1161.7,184.0 L1162.9,188.2 L1164.2,192.3 L1165.4,196.4 L1166.7,200.5 L1175.8,200.5 L1174.6,196.4 L1173.3,192.3 L1172.1,188.2 L1170.9,184.0 L1169.7,179.9 L1168.5,175.7 L1167.4,171.6 L1166.3,167.4 L1165.2,163.2 L1164.2,159.1 L1163.2,154.9 L1162.2,150.7 L1161.2,146.5Z" fill="#b07020" fill-opacity="0.27"/>
<path d="M1157.9,146.5 L1158.9,150.7 L1159.9,154.9 L1160.9,159.1 L1161.9,163.2 L1163.0,167.4 L1164.1,171.6 L1165.3,175.7 L1166.4,179.9 L1167.6,184.0 L1168.8,188.2 L1170.0,192.3 L1171.3,196.4 L1172.6,200.5 L1175.8,200.5 L1174.6,196.4 L1173.3,192.3 L1172.1,188.2 L1170.9,184.0 L1169.7,179.9 L1168.5,175.7 L1167.4,171.6 L1166.3,167.4 L1165.2,163.2 L1164.2,159.1 L1163.2,154.9 L1162.2,150.7 L1161.2,146.5Z" fill="#a06a30" fill-opacity="0.10"/>
<path d="M1171.5,216.1 L1172.9,220.2 L1174.3,224.2 L1175.8,228.3 L1177.2,232.3 L1178.7,236.3 L1180.3,240.3 L1181.8,244.3 L1183.4,248.2 L1185.0,252.2 L1186.6,256.1 L1188.3,260.0 L1189.9,263.9 L1191.6,267.8 L1201.1,267.8 L1199.4,263.9 L1197.8,260.0 L1196.1,256.1 L1194.5,252.2 L1192.9,248.2 L1191.3,244.3 L1189.8,240.3 L1188.3,236.3 L1186.7,232.3 L1185.3,228.3 L1183.8,224.2 L1182.4,220.2 L1181.0,216.1Z" fill="#b07020" fill-opacity="0.27"/>
<path d="M1177.5,216.1 L1178.9,220.2 L1180.4,224.2 L1181.8,228.3 L1183.3,232.3 L1184.8,236.3 L1186.3,240.3 L1187.9,244.3 L1189.5,248.2 L1191.0,252.2 L1192.7,256.1 L1194.3,260.0 L1196.0,263.9 L1197.7,267.8 L1201.1,267.8 L1199.4,263.9 L1197.8,260.0 L1196.1,256.1 L1194.5,252.2 L1192.9,248.2 L1191.3,244.3 L1189.8,240.3 L1188.3,236.3 L1186.7,232.3 L1185.3,228.3 L1183.8,224.2 L1182.4,220.2 L1181.0,216.1Z" fill="#a06a30" fill-opacity="0.10"/>
<path d="M1197.9,282.4 L1199.7,286.2 L1201.5,289.9 L1203.3,293.7 L1205.2,297.4 L1207.1,301.1 L1209.0,304.8 L1210.9,308.4 L1212.8,312.0 L1214.8,315.6 L1216.8,319.2 L1218.8,322.8 L1220.8,326.3 L1222.8,329.8 L1232.7,329.8 L1230.7,326.3 L1228.7,322.8 L1226.7,319.2 L1224.7,315.6 L1222.7,312.0 L1220.8,308.4 L1218.9,304.8 L1217.0,301.1 L1215.1,297.4 L1213.2,293.7 L1211.4,289.9 L1209.6,286.2 L1207.8,282.4Z" fill="#b07020" fill-opacity="0.27"/>
<path d="M1204.1,282.4 L1205.9,286.2 L1207.8,289.9 L1209.6,293.7 L1211.5,297.4 L1213.3,301.1 L1215.2,304.8 L1217.2,308.4 L1219.1,312.0 L1221.1,315.6 L1223.0,319.2 L1225.0,322.8 L1227.0,326.3 L1229.1,329.8 L1232.7,329.8 L1230.7,326.3 L1228.7,322.8 L1226.7,319.2 L1224.7,315.6 L1222.7,312.0 L1220.8,308.4 L1218.9,304.8 L1217.0,301.1 L1215.1,297.4 L1213.2,293.7 L1211.4,289.9 L1209.6,286.2 L1207.8,282.4Z" fill="#a06a30" fill-opacity="0.10"/>
<path d="M1230.4,342.9 L1232.5,346.3 L1234.6,349.6 L1236.8,352.9 L1238.9,356.2 L1241.1,359.5 L1243.3,362.7 L1245.6,365.9 L1247.8,369.1 L1250.0,372.2 L1252.3,375.3 L1254.6,378.4 L1256.9,381.4 L1259.2,384.4 L1269.5,384.4 L1267.1,381.4 L1264.9,378.4 L1262.6,375.3 L1260.3,372.2 L1258.1,369.1 L1255.8,365.9 L1253.6,362.7 L1251.4,359.5 L1249.2,356.2 L1247.0,352.9 L1244.9,349.6 L1242.8,346.3 L1240.6,342.9Z" fill="#b07020" fill-opacity="0.27"/>
<path d="M1236.8,342.9 L1239.0,346.3 L1241.1,349.6 L1243.2,352.9 L1245.4,356.2 L1247.6,359.5 L1249.8,362.7 L1252.0,365.9 L1254.3,369.1 L1256.5,372.2 L1258.8,375.3 L1261.1,378.4 L1263.4,381.4 L1265.7,384.4 L1269.5,384.4 L1267.1,381.4 L1264.9,378.4 L1262.6,375.3 L1260.3,372.2 L1258.1,369.1 L1255.8,365.9 L1253.6,362.7 L1251.4,359.5 L1249.2,356.2 L1247.0,352.9 L1244.9,349.6 L1242.8,346.3 L1240.6,342.9Z" fill="#a06a30" fill-opacity="0.10"/>
<path d="M1267.7,395.6 L1270.1,398.4 L1272.5,401.2 L1274.9,404.0 L1277.3,406.7 L1279.7,409.4 L1282.1,412.1 L1284.6,414.7 L1287.0,417.3 L1289.5,419.8 L1291.9,422.3 L1294.4,424.8 L1296.9,427.2 L1299.4,429.6 L1310.1,429.6 L1307.6,427.2 L1305.1,424.8 L1302.6,422.3 L1300.1,419.8 L1297.7,417.3 L1295.2,414.7 L1292.8,412.1 L1290.3,409.4 L1287.9,406.7 L1285.5,404.0 L1283.1,401.2 L1280.7,398.4 L1278.4,395.6Z" fill="#b07020" fill-opacity="0.27"/>
<path d="M1274.4,395.6 L1276.8,398.4 L1279.2,401.2 L1281.6,404.0 L1284.0,406.7 L1286.4,409.4 L1288.8,412.1 L1291.2,414.7 L1293.7,417.3 L1296.2,419.8 L1298.6,422.3 L1301.1,424.8 L1303.6,427.2 L1306.1,429.6 L1310.1,429.6 L1307.6,427.2 L1305.1,424.8 L1302.6,422.3 L1300.1,419.8 L1297.7,417.3 L1295.2,414.7 L1292.8,412.1 L1290.3,409.4 L1287.9,406.7 L1285.5,404.0 L1283.1,401.2 L1280.7,398.4 L1278.4,395.6Z" fill="#a06a30" fill-opacity="0.10"/>
<path d="M1308.6,438.4 L1311.2,440.6 L1313.7,442.8 L1316.2,444.9 L1318.8,447.0 L1321.4,449.0 L1323.9,451.0 L1326.5,453.0 L1329.1,454.9 L1331.7,456.8 L1334.2,458.6 L1336.8,460.4 L1339.4,462.2 L1342.0,463.9 L1353.0,463.9 L1350.5,462.2 L1347.9,460.4 L1345.3,458.6 L1342.7,456.8 L1340.1,454.9 L1337.5,453.0 L1335.0,451.0 L1332.4,449.0 L1329.8,447.0 L1327.3,444.9 L1324.7,442.8 L1322.2,440.6 L1319.6,438.4Z" fill="#b07020" fill-opacity="0.27"/>
<path d="M1315.5,438.4 L1318.0,440.6 L1320.6,442.8 L1323.1,444.9 L1325.7,447.0 L1328.3,449.0 L1330.8,451.0 L1333.4,453.0 L1336.0,454.9 L1338.5,456.8 L1341.1,458.6 L1343.7,460.4 L1346.3,462.2 L1348.9,463.9 L1353.0,463.9 L1350.5,462.2 L1347.9,460.4 L1345.3,458.6 L1342.7,456.8 L1340.1,454.9 L1337.5,453.0 L1335.0,451.0 L1332.4,449.0 L1329.8,447.0 L1327.3,444.9 L1324.7,442.8 L1322.2,440.6 L1319.6,438.4Z" fill="#a06a30" fill-opacity="0.10"/>
<path d="M1351.7,470.0 L1352.8,470.6 L1353.9,471.2 L1355.0,471.8 L1356.1,472.5 L1357.2,473.1 L1358.3,473.7 L1359.4,474.2 L1360.5,474.8 L1361.6,475.4 L1362.7,476.0 L1363.8,476.5 L1364.9,477.1 L1366.0,477.6 L1377.3,477.6 L1376.2,477.1 L1375.1,476.5 L1374.0,476.0 L1372.9,475.4 L1371.8,474.8 L1370.7,474.2 L1369.6,473.7 L1368.5,473.1 L1367.4,472.5 L1366.3,471.8 L1365.2,471.2 L1364.1,470.6 L1363.0,470.0Z" fill="#b07020" fill-opacity="0.27"/>
<path d="M1358.7,470.0 L1359.8,470.6 L1360.9,471.2 L1362.0,471.8 L1363.1,472.5 L1364.2,473.1 L1365.3,473.7 L1366.4,474.2 L1367.5,474.8 L1368.6,475.4 L1369.7,476.0 L1370.8,476.5 L1371.9,477.1 L1373.0,477.6 L1377.3,477.6 L1376.2,477.1 L1375.1,476.5 L1374.0,476.0 L1372.9,475.4 L1371.8,474.8 L1370.7,474.2 L1369.6,473.7 L1368.5,473.1 L1367.4,472.5 L1366.3,471.8 L1365.2,471.2 L1364.1,470.6 L1363.0,470.0Z" fill="#a06a30" fill-opacity="0.10"/>
<path d="M502.6,222.0 L1153.6,48.9 L1153.6,66.7 L502.6,239.8Z" fill="#d8b070" fill-opacity="0.55"/>
<path d="M502.6,222.8 L1153.6,49.7 L1153.6,52.5 L502.6,225.6Z" fill="#b06a10" fill-opacity="0.45"/>
<path d="M502.6,230.0 L1153.6,56.9 L1153.6,58.9 L502.6,232.0Z" fill="#f4c080" fill-opacity="0.22"/>
<path d="M513.5,294.6 L1164.5,121.5 L1164.5,138.8 L513.5,311.9Z" fill="#d8b070" fill-opacity="0.55"/>
<path d="M513.5,295.4 L1164.5,122.3 L1164.5,125.1 L513.5,298.2Z" fill="#b06a10" fill-opacity="0.45"/>
<path d="M513.5,302.6 L1164.5,129.5 L1164.5,131.5 L513.5,304.6Z" fill="#f4c080" fill-opacity="0.22"/>
<path d="M532.4,366.8 L1183.4,193.7 L1183.4,210.6 L532.4,383.7Z" fill="#d8b070" fill-opacity="0.55"/>
<path d="M532.4,367.6 L1183.4,194.5 L1183.4,197.3 L532.4,370.4Z" fill="#b06a10" fill-opacity="0.45"/>
<path d="M532.4,374.8 L1183.4,201.7 L1183.4,203.7 L532.4,376.8Z" fill="#f4c080" fill-opacity="0.22"/>
<path d="M558.8,436.0 L1209.8,262.9 L1209.8,279.3 L558.8,452.4Z" fill="#d8b070" fill-opacity="0.55"/>
<path d="M558.8,436.8 L1209.8,263.7 L1209.8,266.5 L558.8,439.6Z" fill="#b06a10" fill-opacity="0.45"/>
<path d="M558.8,444.0 L1209.8,270.9 L1209.8,272.9 L558.8,446.0Z" fill="#f4c080" fill-opacity="0.22"/>
<path d="M591.7,499.7 L1242.7,326.6 L1242.7,342.6 L591.7,515.7Z" fill="#d8b070" fill-opacity="0.55"/>
<path d="M591.7,500.5 L1242.7,327.4 L1242.7,330.2 L591.7,503.3Z" fill="#b06a10" fill-opacity="0.45"/>
<path d="M591.7,507.7 L1242.7,334.6 L1242.7,336.6 L591.7,509.7Z" fill="#f4c080" fill-opacity="0.22"/>
<path d="M629.8,555.7 L1280.8,382.6 L1280.8,398.1 L629.8,571.3Z" fill="#d8b070" fill-opacity="0.55"/>
<path d="M629.8,566.3 L1280.8,393.1 L1280.8,397.6 L629.8,570.8Z" fill="#b87418" fill-opacity="0.28"/>
<path d="M629.8,569.7 L1280.8,396.5 L1280.8,397.5 L629.8,570.7Z" fill="#8a5a20" fill-opacity="0.25"/>
<path d="M629.8,556.7 L1280.8,383.6 L1280.8,386.6 L629.8,559.7Z" fill="#f4c080" fill-opacity="0.2"/>
<path d="M671.8,601.9 L1322.8,428.8 L1322.8,443.9 L671.8,617.0Z" fill="#d8b070" fill-opacity="0.55"/>
<path d="M671.8,612.0 L1322.8,438.9 L1322.8,443.4 L671.8,616.5Z" fill="#b87418" fill-opacity="0.28"/>
<path d="M671.8,615.4 L1322.8,442.3 L1322.8,443.3 L671.8,616.4Z" fill="#8a5a20" fill-opacity="0.25"/>
<path d="M671.8,602.9 L1322.8,429.8 L1322.8,432.8 L671.8,605.9Z" fill="#f4c080" fill-opacity="0.2"/>
<path d="M716.3,636.8 L1367.3,463.6 L1367.3,478.3 L716.3,651.4Z" fill="#d8b070" fill-opacity="0.55"/>
<path d="M716.3,646.4 L1367.3,473.3 L1367.3,477.8 L716.3,650.9Z" fill="#b87418" fill-opacity="0.28"/>
<path d="M716.3,649.8 L1367.3,476.7 L1367.3,477.7 L716.3,650.8Z" fill="#8a5a20" fill-opacity="0.25"/>
<path d="M716.3,637.8 L1367.3,464.6 L1367.3,467.6 L716.3,640.8Z" fill="#f4c080" fill-opacity="0.2"/>
<path d="M542.7,210.2 L543.8,223.9 L545.2,237.7 L547.0,251.6 L549.1,265.5 L551.4,279.5 L554.1,293.5 L557.1,307.4 L560.5,321.3 L564.1,335.2 L568.0,349.0 L572.2,362.7 L576.6,376.3 L581.4,389.8 L586.4,403.1 L591.7,416.2 L597.2,429.2 L603.0,442.0 L609.0,454.5 L615.3,466.8 L621.7,478.8 L628.4,490.6 L635.3,502.1 L642.4,513.2 L649.7,524.1 L657.1,534.6 L664.7,544.7 L672.5,554.5 L680.4,563.9 L688.4,572.9 L696.6,581.5 L704.8,589.7 L713.2,597.5 L721.6,604.8 L730.1,611.7 L738.7,618.1 L747.3,624.0 L755.9,629.4 L764.6,634.4 L773.3,638.9 L784.3,638.9 L775.6,634.4 L766.9,629.4 L758.3,624.0 L749.7,618.1 L741.1,611.7 L732.6,604.8 L724.2,597.5 L715.8,589.7 L707.6,581.5 L699.4,572.9 L691.4,563.9 L683.5,554.5 L675.7,544.7 L668.1,534.6 L660.7,524.1 L653.4,513.2 L646.3,502.1 L639.4,490.6 L632.7,478.8 L626.3,466.8 L620.0,454.5 L614.0,442.0 L608.2,429.2 L602.7,416.2 L597.4,403.1 L592.4,389.8 L587.6,376.3 L583.2,362.7 L579.0,349.0 L575.1,335.2 L571.5,321.3 L568.1,307.4 L565.1,293.5 L562.4,279.5 L560.1,265.5 L558.0,251.6 L556.2,237.7 L554.8,223.9 L553.7,210.2Z" fill="#e8b078" fill-opacity="0.28"/>
<path d="M541.7,210.2 L542.8,223.9 L544.2,237.7 L546.0,251.6 L548.1,265.5 L550.4,279.5 L553.1,293.5 L556.1,307.4 L559.5,321.3 L563.1,335.2 L567.0,349.0 L571.2,362.7 L575.6,376.3 L580.4,389.8 L585.4,403.1 L590.7,416.2 L596.2,429.2 L602.0,442.0 L608.0,454.5 L614.3,466.8 L620.7,478.8 L627.4,490.6 L634.3,502.1 L641.4,513.2 L648.7,524.1 L656.1,534.6 L663.7,544.7 L671.5,554.5 L679.4,563.9 L687.4,572.9 L695.6,581.5 L703.8,589.7 L712.2,597.5 L720.6,604.8 L729.1,611.7 L737.7,618.1 L746.3,624.0 L754.9,629.4 L763.6,634.4 L772.3,638.9" fill="none" stroke="#6a5040" stroke-opacity="0.4" stroke-width="1.2"/>
<path d="M762.3,637.4 L781.3,632.4 L782.3,636.4 L763.3,641.4Z" fill="#a07050" fill-opacity="0.25"/>
<path d="M532.7,208.0 L550.7,212.4" stroke="#7a5a3a" stroke-opacity="0.35" stroke-width="1.5"/>
<path d="M747.0,155.8 L748.1,169.6 L749.6,183.4 L751.3,197.3 L753.4,211.2 L755.8,225.2 L758.5,239.1 L761.5,253.1 L764.8,267.0 L768.4,280.9 L772.3,294.7 L776.5,308.4 L781.0,322.0 L785.7,335.4 L790.7,348.7 L796.0,361.9 L801.6,374.9 L807.3,387.6 L813.4,400.1 L819.6,412.4 L826.1,424.5 L832.8,436.2 L839.7,447.7 L846.8,458.9 L854.0,469.7 L861.5,480.2 L869.1,490.4 L876.8,500.2 L884.7,509.6 L892.8,518.6 L900.9,527.2 L909.2,535.4 L917.5,543.1 L925.9,550.4 L934.5,557.3 L943.0,563.7 L951.6,569.6 L960.3,575.1 L969.0,580.1 L977.7,584.5 L988.7,584.5 L980.0,580.1 L971.3,575.1 L962.6,569.6 L954.0,563.7 L945.5,557.3 L936.9,550.4 L928.5,543.1 L920.2,535.4 L911.9,527.2 L903.8,518.6 L895.7,509.6 L887.8,500.2 L880.1,490.4 L872.5,480.2 L865.0,469.7 L857.8,458.9 L850.7,447.7 L843.8,436.2 L837.1,424.5 L830.6,412.4 L824.4,400.1 L818.3,387.6 L812.6,374.9 L807.0,361.9 L801.7,348.7 L796.7,335.4 L792.0,322.0 L787.5,308.4 L783.3,294.7 L779.4,280.9 L775.8,267.0 L772.5,253.1 L769.5,239.1 L766.8,225.2 L764.4,211.2 L762.3,197.3 L760.6,183.4 L759.1,169.6 L758.0,155.8Z" fill="#e8b078" fill-opacity="0.28"/>
<path d="M746.0,155.8 L747.1,169.6 L748.6,183.4 L750.3,197.3 L752.4,211.2 L754.8,225.2 L757.5,239.1 L760.5,253.1 L763.8,267.0 L767.4,280.9 L771.3,294.7 L775.5,308.4 L780.0,322.0 L784.7,335.4 L789.7,348.7 L795.0,361.9 L800.6,374.9 L806.3,387.6 L812.4,400.1 L818.6,412.4 L825.1,424.5 L831.8,436.2 L838.7,447.7 L845.8,458.9 L853.0,469.7 L860.5,480.2 L868.1,490.4 L875.8,500.2 L883.7,509.6 L891.8,518.6 L899.9,527.2 L908.2,535.4 L916.5,543.1 L924.9,550.4 L933.5,557.3 L942.0,563.7 L950.6,569.6 L959.3,575.1 L968.0,580.1 L976.7,584.5" fill="none" stroke="#6a5040" stroke-opacity="0.4" stroke-width="1.2"/>
<path d="M966.7,583.0 L985.7,578.0 L986.7,582.0 L967.7,587.0Z" fill="#a07050" fill-opacity="0.25"/>
<path d="M737.0,153.6 L755.0,158.0" stroke="#7a5a3a" stroke-opacity="0.35" stroke-width="1.5"/>
<path d="M948.0,102.4 L949.1,116.1 L950.6,129.9 L952.3,143.8 L954.4,157.7 L956.8,171.7 L959.5,185.7 L962.5,199.6 L965.8,213.6 L969.4,227.4 L973.3,241.2 L977.5,254.9 L982.0,268.5 L986.7,282.0 L991.7,295.3 L997.0,308.4 L1002.6,321.4 L1008.3,334.2 L1014.4,346.7 L1020.6,359.0 L1027.1,371.0 L1033.8,382.8 L1040.7,394.3 L1047.8,405.4 L1055.0,416.3 L1062.5,426.8 L1070.1,436.9 L1077.8,446.7 L1085.7,456.1 L1093.8,465.1 L1101.9,473.7 L1110.2,481.9 L1118.5,489.7 L1126.9,497.0 L1135.5,503.9 L1144.0,510.3 L1152.6,516.2 L1161.3,521.6 L1170.0,526.6 L1178.7,531.1 L1189.7,531.1 L1181.0,526.6 L1172.3,521.6 L1163.6,516.2 L1155.0,510.3 L1146.5,503.9 L1137.9,497.0 L1129.5,489.7 L1121.2,481.9 L1112.9,473.7 L1104.8,465.1 L1096.7,456.1 L1088.8,446.7 L1081.1,436.9 L1073.5,426.8 L1066.0,416.3 L1058.8,405.4 L1051.7,394.3 L1044.8,382.8 L1038.1,371.0 L1031.6,359.0 L1025.4,346.7 L1019.3,334.2 L1013.6,321.4 L1008.0,308.4 L1002.7,295.3 L997.7,282.0 L993.0,268.5 L988.5,254.9 L984.3,241.2 L980.4,227.4 L976.8,213.6 L973.5,199.6 L970.5,185.7 L967.8,171.7 L965.4,157.7 L963.3,143.8 L961.6,129.9 L960.1,116.1 L959.0,102.4Z" fill="#e8b078" fill-opacity="0.28"/>
<path d="M947.0,102.4 L948.1,116.1 L949.6,129.9 L951.3,143.8 L953.4,157.7 L955.8,171.7 L958.5,185.7 L961.5,199.6 L964.8,213.6 L968.4,227.4 L972.3,241.2 L976.5,254.9 L981.0,268.5 L985.7,282.0 L990.7,295.3 L996.0,308.4 L1001.6,321.4 L1007.3,334.2 L1013.4,346.7 L1019.6,359.0 L1026.1,371.0 L1032.8,382.8 L1039.7,394.3 L1046.8,405.4 L1054.0,416.3 L1061.5,426.8 L1069.1,436.9 L1076.8,446.7 L1084.7,456.1 L1092.8,465.1 L1100.9,473.7 L1109.2,481.9 L1117.5,489.7 L1125.9,497.0 L1134.5,503.9 L1143.0,510.3 L1151.6,516.2 L1160.3,521.6 L1169.0,526.6 L1177.7,531.1" fill="none" stroke="#6a5040" stroke-opacity="0.4" stroke-width="1.2"/>
<path d="M1167.7,529.6 L1186.7,524.6 L1187.7,528.6 L1168.7,533.6Z" fill="#a07050" fill-opacity="0.25"/>
<path d="M938.0,100.2 L956.0,104.6" stroke="#7a5a3a" stroke-opacity="0.35" stroke-width="1.5"/>
<path d="M1149.2,48.9 L1150.3,62.6 L1151.7,76.4 L1153.5,90.3 L1155.5,104.3 L1157.9,118.2 L1160.6,132.2 L1163.6,146.1 L1166.9,160.1 L1170.5,173.9 L1174.4,187.7 L1178.6,201.4 L1183.1,215.0 L1187.9,228.5 L1192.9,241.8 L1198.2,254.9 L1203.7,267.9 L1209.5,280.7 L1215.5,293.2 L1221.7,305.5 L1228.2,317.5 L1234.9,329.3 L1241.8,340.8 L1248.9,351.9 L1256.2,362.8 L1263.6,373.3 L1271.2,383.4 L1279.0,393.2 L1286.9,402.6 L1294.9,411.6 L1303.0,420.2 L1311.3,428.4 L1319.6,436.2 L1328.1,443.5 L1336.6,450.4 L1345.2,456.8 L1353.8,462.7 L1362.4,468.2 L1371.1,473.1 L1379.8,477.6 L1390.8,477.6 L1382.1,473.1 L1373.4,468.2 L1364.8,462.7 L1356.2,456.8 L1347.6,450.4 L1339.1,443.5 L1330.6,436.2 L1322.3,428.4 L1314.0,420.2 L1305.9,411.6 L1297.9,402.6 L1290.0,393.2 L1282.2,383.4 L1274.6,373.3 L1267.2,362.8 L1259.9,351.9 L1252.8,340.8 L1245.9,329.3 L1239.2,317.5 L1232.7,305.5 L1226.5,293.2 L1220.5,280.7 L1214.7,267.9 L1209.2,254.9 L1203.9,241.8 L1198.9,228.5 L1194.1,215.0 L1189.6,201.4 L1185.4,187.7 L1181.5,173.9 L1177.9,160.1 L1174.6,146.1 L1171.6,132.2 L1168.9,118.2 L1166.5,104.3 L1164.5,90.3 L1162.7,76.4 L1161.3,62.6 L1160.2,48.9Z" fill="#e8b078" fill-opacity="0.28"/>
<path d="M1148.2,48.9 L1149.3,62.6 L1150.7,76.4 L1152.5,90.3 L1154.5,104.3 L1156.9,118.2 L1159.6,132.2 L1162.6,146.1 L1165.9,160.1 L1169.5,173.9 L1173.4,187.7 L1177.6,201.4 L1182.1,215.0 L1186.9,228.5 L1191.9,241.8 L1197.2,254.9 L1202.7,267.9 L1208.5,280.7 L1214.5,293.2 L1220.7,305.5 L1227.2,317.5 L1233.9,329.3 L1240.8,340.8 L1247.9,351.9 L1255.2,362.8 L1262.6,373.3 L1270.2,383.4 L1278.0,393.2 L1285.9,402.6 L1293.9,411.6 L1302.0,420.2 L1310.3,428.4 L1318.6,436.2 L1327.1,443.5 L1335.6,450.4 L1344.2,456.8 L1352.8,462.7 L1361.4,468.2 L1370.1,473.1 L1378.8,477.6" fill="none" stroke="#6a5040" stroke-opacity="0.4" stroke-width="1.2"/>
<path d="M1368.8,476.1 L1387.8,471.1 L1388.8,475.1 L1369.8,480.1Z" fill="#a07050" fill-opacity="0.25"/>
<path d="M1139.2,46.7 L1157.2,51.1" stroke="#7a5a3a" stroke-opacity="0.35" stroke-width="1.5"/>
</g>
<path d="M508.7,203.9 L509.7,218.8 L511.0,233.9 L512.7,249.0 L514.8,264.2 L517.2,279.4 L520.0,294.7 L523.2,309.9 L526.7,325.1 L530.6,340.3 L534.8,355.4 L539.3,370.4 L544.2,385.2 L549.3,399.9 L554.8,414.4 L560.6,428.8 L566.7,442.9 L573.1,456.8 L579.7,470.4 L586.6,483.7 L593.8,496.8 L601.2,509.5 L608.8,521.8 L616.7,533.8 L624.7,545.4 L633.0,556.7 L641.4,567.5 L650.0,577.8 L658.8,587.7 L667.6,597.2 L676.7,606.1 L685.8,614.6 L695.0,622.5 L704.3,629.9 L713.7,636.8 L723.1,643.2 L732.5,649.0 L742.0,654.2 L751.5,658.8 L761.0,662.9" fill="none" stroke="#7a3c00" stroke-width="1.2" stroke-opacity="0.75"/>
<path d="M761.0,662.9 L1404.0,491.9" fill="none" stroke="#b05a00" stroke-width="1" stroke-opacity="0.4"/>
<line x1="912" y1="403" x2="941" y2="368" stroke="#ff00ff" stroke-width="1.6"/>
<path d="M949.6,356 L937,364.5 L945.5,370.5Z" fill="#8a008a"/>
<line x1="926.5" y1="386" x2="987" y2="369.5" stroke="#6e0000" stroke-width="2.2"/>
<path d="M1000,366 L983.5,365.5 L986.5,375Z" fill="#700000"/>
<text x="953.5" y="357.7" font-family="Liberation Sans" font-weight="bold" font-size="14.5" letter-spacing="1.1" fill="#000">S-dir</text>
<text x="1003" y="366.7" font-family="Liberation Sans" font-weight="bold" font-size="14.5" letter-spacing="1.1" fill="#000">R-dir</text>
<line x1="1282" y1="694" x2="1282" y2="650" stroke="#1c9c1c" stroke-width="1.2"/>
<path d="M1282,638 L1278,652 L1286.5,652Z" fill="#007a00"/>
<line x1="1282" y1="694" x2="1247" y2="704" stroke="#2020ff" stroke-width="1.2"/>
<path d="M1238,706 L1248,701 Q1252,704 1249,707.5Z" fill="#0000c8"/>
<line x1="1282" y1="694" x2="1310" y2="704" stroke="#ff2020" stroke-width="1.2"/>
<path d="M1319,709 L1308,701.5 Q1304,705 1307,709Z" fill="#c80000"/>
<text x="1281" y="629.8" font-family="Liberation Sans" font-weight="bold" font-size="19" fill="#17a017">Y</text>
<text x="1228" y="708" font-family="Liberation Sans" font-weight="bold" font-size="17" fill="#0000ff">Z</text>
<text x="1323.8" y="711.8" font-family="Liberation Sans" font-weight="bold" font-size="19" fill="#ff0000">X</text>
</svg>

<div class=a style="left:119px;top:0;width:45px;height:1px;background:#9a9a9a"></div>
<div class=a style="left:1292px;top:0;width:45px;height:1px;background:#9a9a9a"></div>
<div class=a style="left:3px;top:3px;width:495px;height:760px;border:1px solid #c0c0c0;border-radius:8px 8px 0 0;background:#f0f0f0;overflow:hidden">
  <div class=a style="left:0;top:0;width:493px;height:28px;background:#f3f3f3"></div>
</div>
<!-- title icon -->
<svg class=a style="left:10px;top:8px" width="18" height="18" viewBox="0 0 18 18">
  <path d="M7,3.2 L11,3.2 L10,1.4 L8,1.4Z" fill="#1f4e80"/>
  <rect x="8.4" y="3" width="1.1" height="2.5" fill="#1f4e80" opacity="0.8"/>
  <path d="M1.4,7.6 L8.9,4.7 L16.4,7.6 L8.9,10.7Z" fill="#1f4e80"/>
  <path d="M1.4,10.2 L6.8,12.9 M16.6,10.2 L11.1,12.9" stroke="#1f4e80" stroke-width="1.3"/>
  <rect x="8.4" y="11.3" width="1.1" height="3.8" fill="#1f4e80" opacity="0.8"/>
  <path d="M7,15 L11,15 L10,16.5 L8,16.5Z" fill="#1f4e80"/>
</svg>
<!-- close X -->
<svg class=a style="left:477px;top:11px" width="12" height="12" viewBox="0 0 12 12">
  <path d="M1,1 L10.5,10.5 M10.5,1 L1,10.5" stroke="#8a8a8a" stroke-width="1.1"/>
</svg>
<!-- group box -->
<div class=a style="left:14px;top:48px;width:472px;height:47px;border:1px solid #dadada"></div>
<div class=a style="left:19px;top:42px;width:127px;height:12px;background:#f0f0f0"></div>
<div class=a style="left:25px;top:65px;width:68px;height:20px;background:#fdfdfd;border:1px solid #d2d2d2;border-bottom-color:#bcbcbc;border-radius:4px"></div>
<!-- tree -->
<div class=a style="left:14px;top:129px;width:472px;height:190px;background:#fff;border:1px solid #9c9ca4;border-top-width:2px"></div>
<svg class=a style="left:36px;top:131px" width="18" height="18" viewBox="0 0 18 18">
  <rect x="1.2" y="1.3" width="14.6" height="3.2" rx="0.8" fill="none" stroke="#1f4e80" stroke-width="1.4"/>
  <path d="M4,1.5 V4.5 M6.5,1.5 V4.5 M9,1.5 V4.5 M11.5,1.5 V4.5" stroke="#1f4e80" stroke-width="0.8"/>
  <rect x="1.5" y="6.3" width="14" height="3.2" rx="0.8" fill="none" stroke="#1f4e80" stroke-width="1.2"/>
  <rect x="1.2" y="11" width="5.8" height="3.6" rx="0.8" fill="none" stroke="#1f4e80" stroke-width="1.3"/>
  <path d="M2.5,14.6 V16.5" stroke="#1f4e80" stroke-width="0.9"/>
  <circle cx="11.8" cy="12.8" r="3.9" fill="#1f4e80"/>
  <path d="M11.8,10.4 V15.2 M9.4,12.8 H14.2" stroke="#dfe7f0" stroke-width="1.3"/>
</svg>
<!-- checkbox include -->
<div class=a style="left:16px;top:324px;width:13px;height:13px;border:1px solid #5c5c5c;border-radius:3px;background:#f6f6f6"></div>
<!-- magnifier & x disabled -->
<svg class=a style="left:444px;top:322px" width="40" height="18" viewBox="0 0 40 18">
  <circle cx="7.5" cy="7.8" r="5.2" fill="none" stroke="#c3ceda" stroke-width="1.2"/>
  <path d="M7.5,5 V10.6 M4.7,7.8 H10.3" stroke="#c3ceda" stroke-width="1.4"/>
  <path d="M11.2,11.6 L13.8,15" stroke="#c3ceda" stroke-width="1.6"/>
  <path d="M25,5.2 L32.8,12.8 M32.8,5.2 L25,12.8" stroke="#c3d2dc" stroke-width="2.6"/>
</svg>
<!-- combo -->
<div class=a style="left:118px;top:353px;width:56px;height:19px;background:#fdfdfd;border:1px solid #dcdcdc;border-radius:3px"></div>
<svg class=a style="left:160px;top:358px" width="10" height="9" viewBox="0 0 10 9">
  <path d="M1.3,2.5 L5,6.3 L8.7,2.5" fill="none" stroke="#5a5a5a" stroke-width="1"/>
</svg>
<!-- table -->
<div class=a style="left:14px;top:394px;width:472px;height:189px;background:#fff;border:1px solid #9c9ca4;border-top-width:2px"></div>
<div class=a style="left:53px;top:396px;width:1px;height:20px;background:#e6e6e6"></div>
<div class=a style="left:148px;top:396px;width:1px;height:20px;background:#e6e6e6"></div>
<div class=a style="left:242px;top:396px;width:1px;height:20px;background:#e6e6e6"></div>
<div class=a style="left:354px;top:396px;width:1px;height:20px;background:#e6e6e6"></div>
<div class=a style="left:466px;top:396px;width:1px;height:20px;background:#e6e6e6"></div>
<div class=a style="left:34px;top:417px;width:450px;height:68px;background:#d9d9d9"></div>
<!-- toolbar -->
<svg class=a style="left:394px;top:586px" width="92" height="20" viewBox="0 0 92 20">
  <path d="M8,4.8 L13,14 L3,14Z" fill="#c6d3de"/>
  <path d="M25,4.8 L35,4.8 L30,14Z" fill="#c6d3de"/>
  <path d="M49,5 L54.5,3 L58,6.5 L58,15.5 L49,15.5Z" fill="#3f6c95"/>
  <path d="M54.6,3 L58,6.4 L54.6,6.4Z" fill="#f0f0f0"/>
  <path d="M47.2,6 L47.2,17 L56,17" fill="none" stroke="#3f6c95" stroke-width="1.4"/>
  <rect x="65" y="2" width="1" height="16" fill="#d4d4d4"/>
  <path d="M75,5.5 L83,13.8 M83,5.5 L75,13.8" stroke="#3a6a95" stroke-width="2.6"/>
</svg>
<!-- checkbox show -->
<div class=a style="left:14px;top:623px;width:13px;height:13px;border:1px solid #5c5c5c;border-radius:3px;background:#f6f6f6"></div>
<!-- info box -->
<div class=a style="left:14px;top:650px;width:472px;height:27px;background:#f0f0f0;border:1px solid;border-color:#a6a6a6 #fdfdfd #fdfdfd #a6a6a6"></div>
<!-- buttons -->
<div class=a style="left:15px;top:691px;width:25px;height:21px;background:#fdfdfd;border:1px solid #d0d0d0;border-bottom-color:#bcbcbc;border-radius:4px"></div>
<div class=t style="left:21.5px;top:694.5px;font-size:17px;font-weight:bold;color:#2c5d8f">?</div>
<div class=a style="left:340px;top:691px;width:68px;height:20px;background:#fdfdfd;border:1px solid #d0d0d0;border-bottom-color:#bcbcbc;border-radius:4px"></div>
<div class=a style="left:416px;top:691px;width:68px;height:20px;background:#fdfdfd;border:1px solid #d0d0d0;border-bottom-color:#bcbcbc;border-radius:4px"></div>
<!-- status -->
<div class=a style="left:14px;top:718px;width:472px;height:19px;background:#fff"></div>

<div class=t style='left:30.0px;top:11.99px;font-size:12px;letter-spacing:-0.240px;color:#9a9a9a;'>Edit laminate</div>
<div class=t style='left:22.0px;top:43.89px;font-size:11px;letter-spacing:-0.323px;color:#1a1a1a;'>Reference direction (R-dir)</div>
<div class=t style='left:49.3px;top:70.89px;font-size:11px;letter-spacing:-0.523px;color:#1a1a1a;'>Edit</div>
<div class=t style='left:14.0px;top:113.89px;font-size:11px;letter-spacing:-0.723px;color:#1a1a1a;'>Edit</div>
<div class=t style='left:58.0px;top:135.19px;font-size:11px;letter-spacing:-0.302px;color:#1a1a1a;'>Skin</div>
<div class=t style='left:33.1px;top:325.79px;font-size:11px;letter-spacing:-0.458px;color:#1a1a1a;'>Include all instances</div>
<div class=t style='left:13.8px;top:357.59px;font-size:11px;letter-spacing:-0.398px;color:#1a1a1a;'>Stack direction (S-dir)</div>
<div class=t style='left:120.4px;top:357.59px;font-size:11px;letter-spacing:-0.532px;color:#1a1a1a;'>Bottom</div>
<div class=t style='left:13.8px;top:378.29px;font-size:11px;letter-spacing:-0.527px;color:#1a1a1a;'>Ply stack</div>
<div class=t style='left:19.4px;top:401.39px;font-size:11px;letter-spacing:-0.056px;color:#1a1a1a;'>Order</div>
<div class=t style='left:58.2px;top:401.39px;font-size:11px;letter-spacing:0.152px;color:#1a1a1a;'>Name</div>
<div class=t style='left:152.5px;top:401.39px;font-size:11px;letter-spacing:0.191px;color:#1a1a1a;'>Thickness [mm]</div>
<div class=t style='left:247.2px;top:401.39px;font-size:11px;letter-spacing:0.239px;color:#1a1a1a;'>Material</div>
<div class=t style='left:359.0px;top:401.39px;font-size:11px;letter-spacing:0.209px;color:#1a1a1a;'>Orientation [Deg]</div>
<div class=t style='left:37.5px;top:420.69px;font-size:11px;letter-spacing:0.000px;color:#1a1a1a;'>1</div>
<div class=t style='left:57.2px;top:420.69px;font-size:11px;letter-spacing:-0.317px;color:#1a1a1a;'>Ply 1</div>
<div class=t style='left:151.4px;top:420.69px;font-size:11px;letter-spacing:0.000px;color:#1a1a1a;'>0.2</div>
<div class=t style='left:246.5px;top:420.69px;font-size:11px;letter-spacing:0.215px;color:#0000ee;text-decoration:underline'>Composite</div>
<div class=t style='left:357.7px;top:420.69px;font-size:11px;letter-spacing:0.000px;color:#1a1a1a;'>0</div>
<div class=t style='left:37.5px;top:437.69px;font-size:11px;letter-spacing:0.000px;color:#1a1a1a;'>2</div>
<div class=t style='left:57.2px;top:437.69px;font-size:11px;letter-spacing:-0.317px;color:#1a1a1a;'>Ply 2</div>
<div class=t style='left:151.4px;top:437.69px;font-size:11px;letter-spacing:0.000px;color:#1a1a1a;'>0.3</div>
<div class=t style='left:246.5px;top:437.69px;font-size:11px;letter-spacing:0.215px;color:#0000ee;text-decoration:underline'>Composite</div>
<div class=t style='left:357.7px;top:437.69px;font-size:11px;letter-spacing:0.000px;color:#1a1a1a;'>90</div>
<div class=t style='left:37.5px;top:454.69px;font-size:11px;letter-spacing:0.000px;color:#1a1a1a;'>3</div>
<div class=t style='left:57.2px;top:454.69px;font-size:11px;letter-spacing:-0.317px;color:#1a1a1a;'>Ply 3</div>
<div class=t style='left:151.4px;top:454.69px;font-size:11px;letter-spacing:0.000px;color:#1a1a1a;'>0.3</div>
<div class=t style='left:246.5px;top:454.69px;font-size:11px;letter-spacing:0.215px;color:#0000ee;text-decoration:underline'>Composite</div>
<div class=t style='left:357.7px;top:454.69px;font-size:11px;letter-spacing:0.000px;color:#1a1a1a;'>0</div>
<div class=t style='left:37.5px;top:471.69px;font-size:11px;letter-spacing:0.000px;color:#1a1a1a;'>4</div>
<div class=t style='left:57.2px;top:471.69px;font-size:11px;letter-spacing:-0.317px;color:#1a1a1a;'>Ply 4</div>
<div class=t style='left:151.4px;top:471.69px;font-size:11px;letter-spacing:0.000px;color:#1a1a1a;'>0.2</div>
<div class=t style='left:246.5px;top:471.69px;font-size:11px;letter-spacing:0.215px;color:#0000ee;text-decoration:underline'>Composite</div>
<div class=t style='left:357.7px;top:471.69px;font-size:11px;letter-spacing:0.000px;color:#1a1a1a;'>90</div>
<div class=t style='left:34.2px;top:487.69px;font-size:11px;letter-spacing:0.299px;color:#0000ee;text-decoration:underline'>Add ply</div>
<div class=t style='left:30.5px;top:624.29px;font-size:11px;letter-spacing:-0.345px;color:#1a1a1a;'>Show ply orientation</div>
<div class=t style='left:17.5px;top:652.69px;font-size:11px;letter-spacing:-0.443px;color:#1a1a1a;'>Stack thickness: 1 [mm]</div>
<div class=t style='left:17.5px;top:664.89px;font-size:11px;letter-spacing:-0.345px;color:#1a1a1a;'>Approximate stack mass: 0.938917 [kg]</div>
<div class=t style='left:357.7px;top:695.49px;font-size:11px;letter-spacing:-0.750px;color:#1a1a1a;'>Cancel</div>
<div class=t style='left:443.0px;top:695.49px;font-size:11px;letter-spacing:-0.400px;color:#1a1a1a;'>OK</div>
<div class=t style='left:20.4px;top:722.79px;font-size:12px;letter-spacing:-0.364px;color:#1a1a1a;'>Create the plies of the laminate. Rearrange order by up/down arrows or by drag and drop.</div>
</body></html>
